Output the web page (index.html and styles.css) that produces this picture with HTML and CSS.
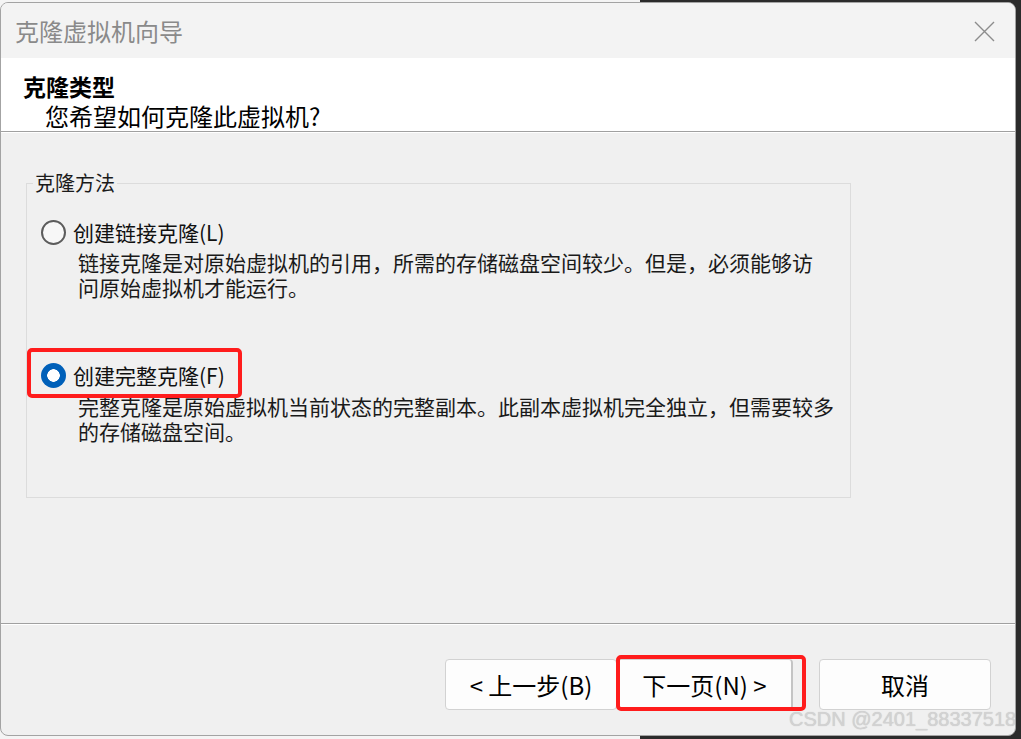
FILE: index.html
```html
<!DOCTYPE html>
<html lang="zh-CN">
<head>
    <meta charset="UTF-8">
    <title>克隆虚拟机向导</title>
    <link rel="stylesheet" href="styles.css">
</head>
<body>
    <div class="window">
        <div class="titlebar">
            <span class="title">克隆虚拟机向导</span>
            <svg class="close" width="21" height="21" viewBox="0 0 21 21">
                <path d="M1 1 L20 20 M20 1 L1 20" stroke="#8c8c8c" stroke-width="1.4" fill="none"/>
            </svg>
        </div>

        <div class="header">
            <div class="heading">克隆类型</div>
            <div class="subheading">您希望如何克隆此虚拟机?</div>
        </div>

        <div class="content">
            <fieldset class="group">
                <legend>克隆方法</legend>

                <label class="option first">
                    <span class="radio"></span>创建链接克隆(L)
                </label>
                <p class="desc">链接克隆是对原始虚拟机的引用，所需的存储磁盘空间较少。但是，必须能够访<br>问原始虚拟机才能运行。</p>

                <!-- 选中项，外面有红色标注框 -->
                <label class="option second marked">
                    <span class="radio checked"></span>创建完整克隆(F)
                </label>
                <p class="desc">完整克隆是原始虚拟机当前状态的完整副本。此副本虚拟机完全独立，但需要较多<br>的存储磁盘空间。</p>
            </fieldset>
        </div>

        <div class="footer">
            <button class="btn back">&lt; 上一步(B)</button>
            <button class="btn next marked">下一页(N) &gt;</button>
            <button class="btn cancel">取消</button>
        </div>

        <div class="watermark">CSDN @2401_88337518</div>
    </div>
</body>
</html>
```

FILE: styles.css
```css
html, body {
    margin: 0;
    padding: 0;
}
body {
    width: 1021px;
    height: 739px;
    overflow: hidden;
    background: linear-gradient(to right, #f4f4f4 0 640px, #2b2b2b 640px);
    font-family: "Noto Sans CJK SC", sans-serif;
}
.window {
    position: relative;
    box-sizing: border-box;
    width: 1016px;
    height: 734px;
    margin-top: 2px;
    border: 1px solid #a3a3a3;
    border-radius: 8px;
    overflow: hidden;
    background-color: #f0f0f0;
    display: flex;
    flex-direction: column;
}
.titlebar {
    height: 55px;
    flex: none;
    background-color: #f3f3f3;
    display: flex;
    align-items: center;
    justify-content: space-between;
    padding: 0 20px 0 14px;
}
.title {
    font-size: 24px;
    color: #8a8a8a;
}
.close {
    display: block;
    margin-top: 1px;
}
.header {
    box-sizing: border-box;
    height: 74px;
    flex: none;
    background-color: #fff;
    border-bottom: 1px solid #a0a0a0;
    padding: 14px 0 0 22px;
    color: #000;
}
.heading {
    font-size: 23px;
    font-weight: bold;
    line-height: 29px;
}
.subheading {
    font-size: 24px;
    line-height: 29px;
    padding-left: 22px;
}
.content {
    flex: 1;
    border-top: 1px solid #fff;
}
.group {
    box-sizing: border-box;
    width: 825px;
    height: 325px;
    margin: 40px 0 0 25px;
    padding: 0 0 0 6px;
    border: 1px solid #dcdcdc;
}
.group legend {
    font-size: 20px;
    line-height: 20px;
    padding: 0 2px;
    color: #1a1a1a;
}
.option {
    position: relative;
    display: flex;
    align-items: center;
    gap: 7px;
    width: fit-content;
    height: 28px;
    margin-left: 8px;
    font-size: 21px;
    color: #111;
}
.option.first {
    margin-top: 25px;
}
.option.second {
    margin-top: 61px;
}
.radio {
    box-sizing: border-box;
    width: 25px;
    height: 25px;
    border-radius: 50%;
    border: 2px solid #5c5c5c;
    background-color: #f7f7f7;
}
.radio.checked {
    border: none;
    background: radial-gradient(circle, #fff 0 6px, #0060b9 6.5px);
}
.desc {
    margin: 4px 0 0 45px;
    font-size: 21px;
    line-height: 25px;
    color: #1a1a1a;
    white-space: nowrap;
}
.option.second + .desc {
    margin-top: 5px;
}
.footer {
    box-sizing: border-box;
    height: 112px;
    flex: none;
    border-top: 1px solid #a0a0a0;
    box-shadow: inset 0 1px #fff;
    padding: 35px 24px 0 0;
    display: flex;
    justify-content: flex-end;
    align-items: flex-start;
}
.btn {
    position: relative;
    box-sizing: border-box;
    width: 172px;
    height: 51px;
    border: 1px solid #d2d2d2;
    border-radius: 4px;
    background-color: #fdfdfd;
    font-family: "Noto Sans CJK SC", sans-serif;
    font-size: 24px;
    color: #000;
    padding: 0;
}
.btn.next {
    width: 176px;
    border-right: 2px solid #c4c4c4;
}
.btn.cancel {
    margin-left: 26px;
}
/* 红色标注框 */
.marked::after {
    content: "";
    position: absolute;
    border: 4px solid #ff1c1c;
    border-radius: 5px;
    pointer-events: none;
}
.option.marked::after {
    left: -14px;
    right: -17px;
    top: -13px;
    bottom: -9px;
}
.btn.marked::after {
    left: -2px;
    right: -15px;
    top: -5px;
    bottom: -2px;
}
.watermark {
    position: absolute;
    left: 788px;
    top: 705px;
    font-family: "Liberation Sans", Arial, sans-serif;
    font-size: 20px;
    color: #d2d2d2;
    text-shadow: 0 0 1px #c4c4c4;
    white-space: nowrap;
}
```
